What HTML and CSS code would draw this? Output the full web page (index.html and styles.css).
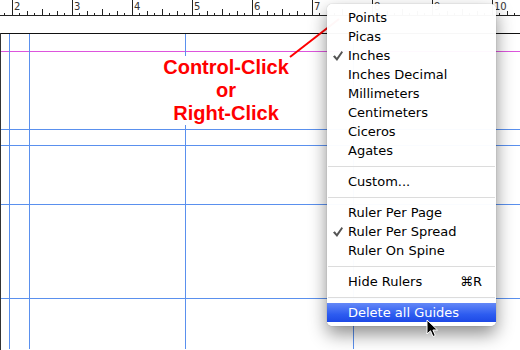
FILE: index.html
```html
<!DOCTYPE html>
<html lang="en">
<head>
  <meta charset="UTF-8">
  <title>Ruler Units Menu</title>
  <link rel="stylesheet" href="styles.css">
</head>
<body>

  <div class="screen">
    <!-- horizontal ruler, one inch = 60px -->
    <svg class="ruler" width="520" height="16" viewBox="0 0 520 16">
      <defs>
        <pattern id="ticks" x="12" y="0" width="60" height="16" patternUnits="userSpaceOnUse">
          <rect x="0" y="0" width="1" height="16" fill="#222"/>
          <rect x="7" y="13" width="1" height="3" fill="#222"/>
          <rect x="15" y="11" width="1" height="5" fill="#222"/>
          <rect x="22" y="13" width="1" height="3" fill="#222"/>
          <rect x="30" y="9" width="1" height="7" fill="#222"/>
          <rect x="37" y="13" width="1" height="3" fill="#222"/>
          <rect x="45" y="11" width="1" height="5" fill="#222"/>
          <rect x="52" y="13" width="1" height="3" fill="#222"/>
        </pattern>
      </defs>
      <rect x="0" y="0" width="520" height="16" fill="url(#ticks)"/>
      <rect x="0" y="15" width="520" height="1" fill="#222"/>
      <g class="ruler-num">
        <text x="14" y="10">2</text>
        <text x="74" y="10">3</text>
        <text x="134" y="10">4</text>
        <text x="194" y="10">5</text>
        <text x="254" y="10">6</text>
        <text x="314" y="10">7</text>
        <text x="374" y="10">8</text>
        <text x="434" y="10">9</text>
        <text x="494" y="10">10</text>
      </g>
    </svg>

    <div class="board">
      <div class="page">
        <div class="margin-line"></div>
        <div class="guide h" style="top: 95px"></div>
        <div class="guide h" style="top: 111px"></div>
        <div class="guide h" style="top: 170px"></div>
        <div class="guide h" style="top: 264px"></div>
        <div class="guide v" style="left: 8px"></div>
        <div class="guide v" style="left: 28px"></div>
        <div class="guide v" style="left: 184px"></div>
        <div class="guide v" style="left: 352px"></div>
      </div>
    </div>

    <div class="callout">
      <div>Control-Click</div>
      <div>or</div>
      <div>Right-Click</div>
    </div>
    <svg class="pointer-line" width="520" height="350" viewBox="0 0 520 350">
      <line x1="290" y1="57" x2="339" y2="19" stroke="#f00" stroke-width="2"/>
    </svg>

    <ul class="menu">
      <li>Points</li>
      <li>Picas</li>
      <li class="checked">Inches</li>
      <li>Inches Decimal</li>
      <li>Millimeters</li>
      <li>Centimeters</li>
      <li>Ciceros</li>
      <li>Agates</li>
      <li class="sep"></li>
      <li>Custom...</li>
      <li class="sep"></li>
      <li>Ruler Per Page</li>
      <li class="checked">Ruler Per Spread</li>
      <li>Ruler On Spine</li>
      <li class="sep"></li>
      <li>Hide Rulers <span class="key">⌘R</span></li>
      <li class="sep"></li>
      <li class="active">Delete all Guides</li>
    </ul>

    <svg class="cursor" width="13" height="20" viewBox="0 0 13 20">
      <path d="M1 1 L1 15 L4.5 11.8 L7 17.5 L9.3 16.5 L6.9 11 L11.5 11 Z" fill="#000" stroke="#fff" stroke-width="1" stroke-linejoin="round"/>
    </svg>
  </div>

</body>
</html>
```

FILE: styles.css
```css
body {
  margin: 0;
  background: #fff;
  font-family: "DejaVu Sans", Verdana, sans-serif;
}
.screen {
  position: relative;
  width: 520px;
  height: 350px;
  overflow: hidden;
  background: #fff;
}
.ruler {
  display: block;
  shape-rendering: crispEdges;
}
.ruler-num text {
  font-family: "DejaVu Sans", sans-serif;
  font-size: 10px;
  fill: #333;
}
.board {
  height: 334px;
  border-left: 1px solid #333;
  border-bottom: 2px solid #333;
  box-sizing: border-box;
}
.page {
  position: relative;
  margin-top: 17px;
  height: 315px;
  border-top: 1px solid #111;
}
.margin-line {
  margin-top: 17px;
  height: 1px;
  background: #dd55dd;
}
.guide {
  position: absolute;
  background: #5a90ee;
}
.guide.h {
  left: 0;
  right: 0;
  height: 1px;
}
.guide.v {
  top: 0;
  bottom: 0;
  width: 1px;
}
.callout {
  position: absolute;
  left: 160px;
  top: 56px;
  width: 132px;
  background: #fff;
  text-align: center;
  font-family: "Liberation Sans", Arial, sans-serif;
  font-weight: bold;
  font-size: 20px;
  line-height: 23px;
  color: #f00;
}
.pointer-line {
  position: absolute;
  left: 0;
  top: 0;
}
.menu {
  position: absolute;
  left: 327px;
  top: 4px;
  width: 169px;
  margin: 0;
  padding: 4px 0;
  list-style: none;
  background: rgba(255, 255, 255, 0.97);
  border-radius: 5px;
  box-shadow: 0 8px 18px rgba(0, 0, 0, 0.45), 0 0 1px rgba(0, 0, 0, 0.4);
  font-size: 13px;
  color: #000;
}
.menu li {
  position: relative;
  display: flex;
  align-items: center;
  justify-content: space-between;
  height: 19px;
  padding: 0 14px 0 21px;
}
.menu li.checked::before {
  content: "";
  position: absolute;
  left: 6px;
  top: 5px;
  width: 10px;
  height: 10px;
  background: #555;
  clip-path: polygon(0 55%, 18% 42%, 38% 68%, 86% 0, 100% 12%, 40% 100%);
}
.menu li.sep {
  height: 12px;
  padding: 0;
}
.menu li.sep::after {
  content: "";
  position: absolute;
  left: 1px;
  right: 1px;
  top: 6px;
  height: 1px;
  background: #dcdcdc;
}
.menu li.active {
  color: #fff;
  background: linear-gradient(#6488f7, #2d5cf0 60%, #1d49e6);
}
.key {
  font-size: 13px;
}
.cursor {
  position: absolute;
  left: 426px;
  top: 319px;
}
```
